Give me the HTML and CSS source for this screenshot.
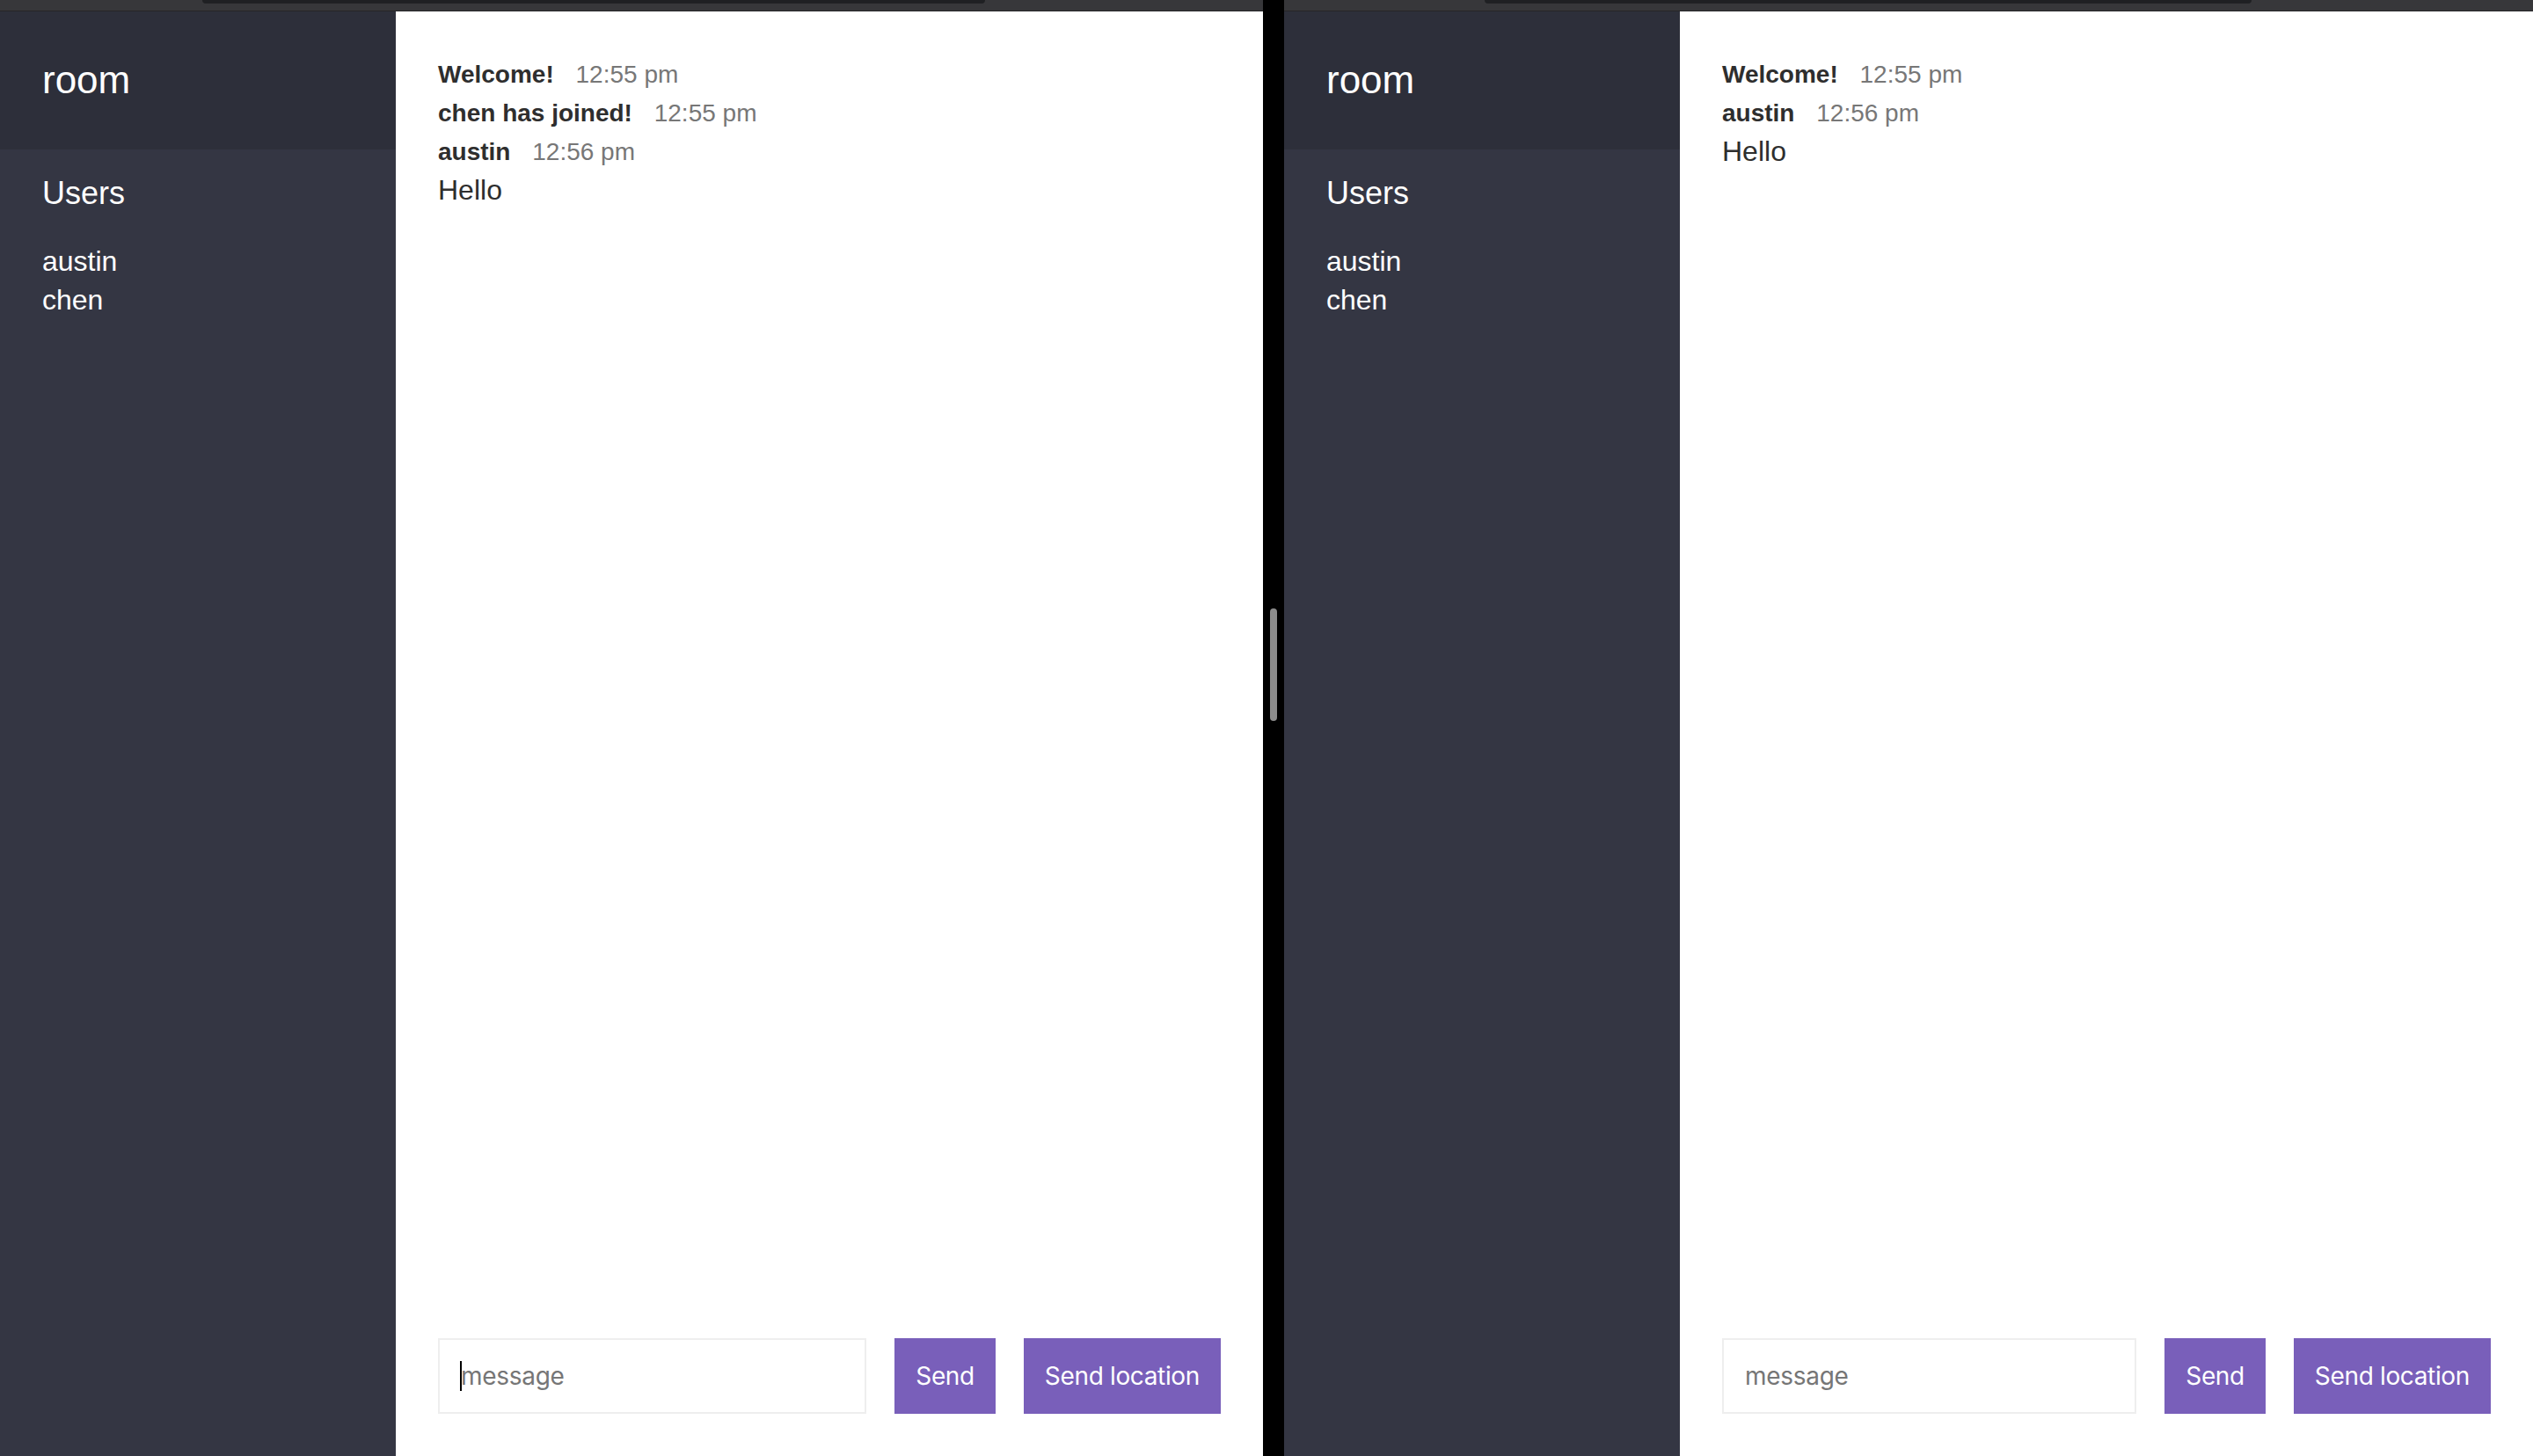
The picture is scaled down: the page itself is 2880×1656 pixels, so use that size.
FILE: index.html
```html
<!DOCTYPE html>
<html lang="en">
<head>
<meta charset="utf-8">
<title>Chat</title>
<link rel="stylesheet" href="styles.css">
</head>
<body>
<div class="desk">
  <section class="window window--left">
    <div class="chrome"><div class="chrome__bar chrome__bar--left"></div></div>
    <div class="chat">
      <aside class="sidebar">
        <h2 class="room-title">room</h2>
        <h3 class="list-title">Users</h3>
        <ul class="users">
          <li>austin</li>
          <li>chen</li>
        </ul>
      </aside>
      <main class="main">
        <div class="messages">
          <div class="message"><p><span class="message__name">Welcome!</span> <span class="message__meta">12:55 pm</span></p></div>
          <div class="message"><p><span class="message__name">chen has joined!</span> <span class="message__meta">12:55 pm</span></p></div>
          <div class="message"><p><span class="message__name">austin</span> <span class="message__meta">12:56 pm</span></p><p class="message__text">Hello</p></div>
        </div>
        <div class="compose">
          <form class="compose__form">
            <div class="field">
              <input class="field__input" type="text" placeholder="message">
              <span class="caret"></span>
            </div>
            <button type="button" class="btn">Send</button>
          </form>
          <button type="button" class="btn">Send location</button>
        </div>
      </main>
    </div>
  </section>
  <div class="divider"><div class="thumb"></div></div>
  <section class="window window--right">
    <div class="chrome"><div class="chrome__bar chrome__bar--right"></div></div>
    <div class="chat">
      <aside class="sidebar">
        <h2 class="room-title">room</h2>
        <h3 class="list-title">Users</h3>
        <ul class="users">
          <li>austin</li>
          <li>chen</li>
        </ul>
      </aside>
      <main class="main">
        <div class="messages">
          <div class="message"><p><span class="message__name">Welcome!</span> <span class="message__meta">12:55 pm</span></p></div>
          <div class="message"><p><span class="message__name">austin</span> <span class="message__meta">12:56 pm</span></p><p class="message__text">Hello</p></div>
        </div>
        <div class="compose">
          <form class="compose__form">
            <div class="field">
              <input class="field__input" type="text" placeholder="message">
            </div>
            <button type="button" class="btn">Send</button>
          </form>
          <button type="button" class="btn">Send location</button>
        </div>
      </main>
    </div>
  </section>
</div>
</body>
</html>
```

FILE: styles.css
```css
* {
  box-sizing: border-box;
  margin: 0;
  padding: 0;
}

html, body {
  width: 2880px;
  height: 1656px;
  overflow: hidden;
}

body {
  font-family: "Liberation Sans", Arial, Helvetica, sans-serif;
  color: #333333;
  background: #000;
}

.desk {
  display: flex;
  width: 2880px;
  height: 1656px;
}

.window {
  display: flex;
  flex-direction: column;
  height: 100%;
}

.window--left {
  width: 1436px;
}

.window--right {
  flex: 1;
}

.chrome {
  height: 13px;
  flex-shrink: 0;
  background: #37373a;
  border-bottom: 1px solid #252527;
}

.chrome__bar {
  height: 4px;
  background: #1f2023;
  border-radius: 0 0 12px 12px;
}

.chrome__bar--left {
  margin-left: 230px;
  width: 890px;
}

.chrome__bar--right {
  margin-left: 228px;
  width: 872px;
}

.chat {
  flex: 1;
  display: flex;
  min-height: 0;
}

.divider {
  width: 24px;
  flex-shrink: 0;
  background: #000;
  display: flex;
  justify-content: center;
  padding-top: 692px;
}

.thumb {
  width: 8px;
  height: 128px;
  border-radius: 4px;
  background: #8c8c8c;
}

.sidebar {
  width: 450px;
  flex-shrink: 0;
  background: #343643;
  color: #ffffff;
}

.room-title {
  font-size: 44px;
  font-weight: 400;
  line-height: 50px;
  background: #2d2f3a;
  padding: 53px 48px 54px 48px;
}

.list-title {
  font-size: 36px;
  font-weight: 400;
  line-height: 42px;
  padding: 29px 48px 0 48px;
}

.users {
  list-style: none;
  font-size: 32px;
  line-height: 44px;
  padding: 34px 48px 0 48px;
}

.main {
  flex: 1;
  display: flex;
  flex-direction: column;
  background: #ffffff;
  min-width: 0;
}

.messages {
  flex: 1;
  padding: 50px 48px 0 48px;
}

.message p {
  font-size: 28px;
  line-height: 44px;
}

.message__name {
  font-weight: 700;
  color: #2e2e2e;
  margin-right: 17px;
}

.message__meta {
  color: #777777;
}

.message .message__text {
  font-size: 32px;
  line-height: 42px;
  color: #2e2e2e;
}

.compose {
  display: flex;
  flex-shrink: 0;
  height: 182px;
  padding: 48px;
}

.compose__form {
  display: flex;
  flex: 1;
  margin-right: 32px;
}

.field {
  position: relative;
  flex: 1;
  display: flex;
  margin-right: 32px;
  min-width: 0;
}

.field__input {
  flex: 1;
  width: 100%;
  min-width: 0;
  border: 2px solid #eeeeee;
  padding: 0 24px;
  font-family: Inter, "Liberation Sans", sans-serif;
  font-size: 28px;
  letter-spacing: -0.3px;
  color: #333333;
  background: #ffffff;
  outline: none;
}

.field__input::placeholder {
  color: #767676;
}

.caret {
  position: absolute;
  left: 25px;
  top: 26px;
  width: 2px;
  height: 34px;
  background: #000000;
}

.btn {
  border: none;
  background: #795fba;
  color: #ffffff;
  font-family: Inter, "Liberation Sans", sans-serif;
  font-size: 28px;
  letter-spacing: -0.35px;
  padding: 0 24px;
  cursor: pointer;
  white-space: nowrap;
}
```
